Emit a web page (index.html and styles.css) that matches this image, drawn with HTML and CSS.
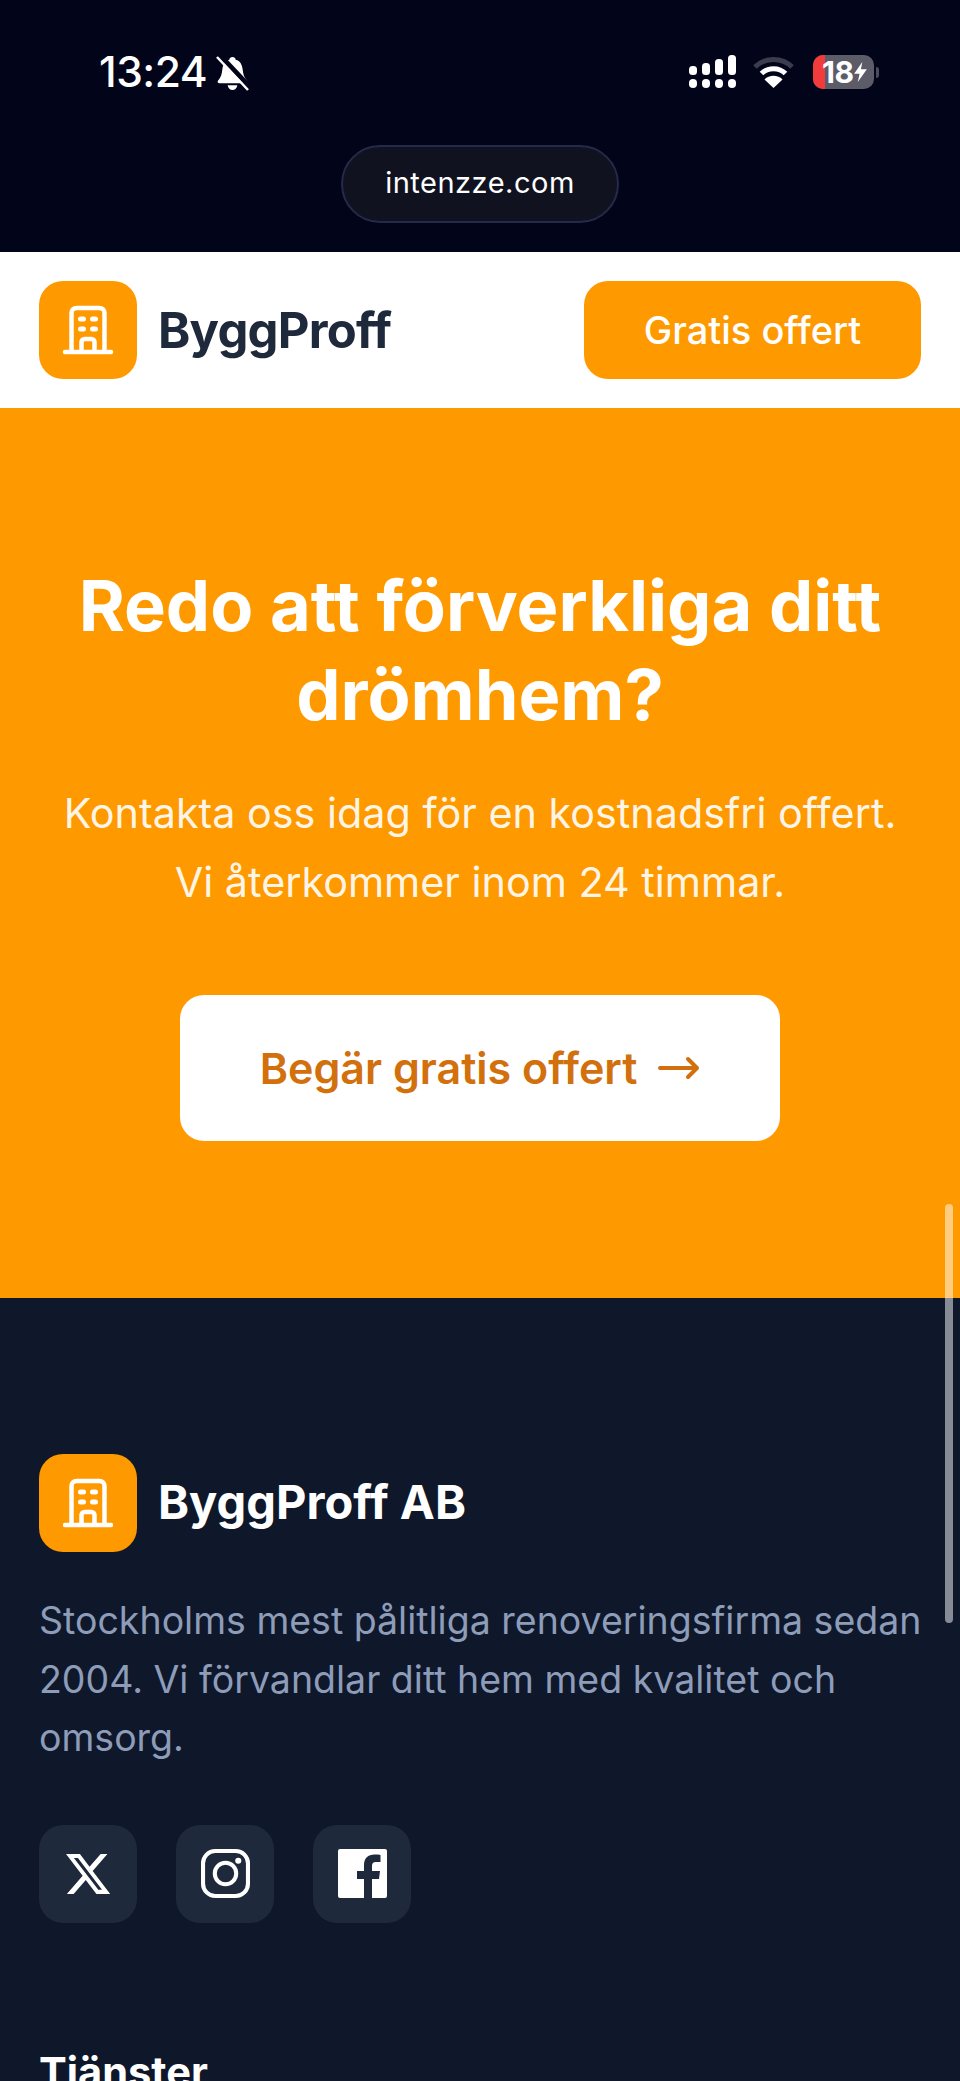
FILE: index.html
```html
<!DOCTYPE html>
<html lang="sv">
<head>
<meta charset="utf-8">
<title>ByggProff</title>
<link rel="stylesheet" href="styles.css">
</head>
<body>
<div class="page">
  <div class="chrome">
    <div class="status">
      <div class="status-left">
        <span class="time">13:24</span>
        <svg class="bell" viewBox="0 0 34 36" aria-hidden="true">
          <path fill="#fff" d="M17 1c2 0 3 1 3.300 2.800C25 5 27 9 27.500 14c.4 5 1.500 8 4.500 11.500.8 1.200 0 2.500-1.500 2.500H3.500C2 28 1.200 26.700 2 25.500 5 22 6.100 19 6.500 14 7 9 9 5 13.700 3.800 14 2 15 1 17 1z"/>
          <path fill="#fff" d="M12 30h10c-.5 3-2.500 5-5 5s-4.500-2-5-5z"/>
          <path stroke="#02041a" stroke-width="5" d="M3 -2 35 32"/>
          <path stroke="#fff" stroke-width="2.600" d="M1 1 33 35"/>
        </svg>
      </div>
      <div class="status-right">
        <svg class="signal" viewBox="0 0 48 34" aria-hidden="true">
          <g fill="#fff">
            <rect x="0" y="11" width="8" height="9" rx="3.500"/><rect x="13" y="8" width="8" height="12" rx="3.500"/><rect x="26" y="4" width="8" height="16" rx="3.500"/><rect x="39" y="0" width="8" height="20" rx="3.500"/>
            <rect x="0" y="24" width="8" height="9" rx="4"/><rect x="13" y="24" width="8" height="9" rx="4"/><rect x="26" y="24" width="8" height="9" rx="4"/><rect x="39" y="24" width="8" height="9" rx="4"/>
          </g>
        </svg>
        <svg class="wifi" viewBox="0 0 41 32" aria-hidden="true">
          <path fill="none" stroke="#3b3d4c" stroke-width="5" d="M2 11C12 1 29 1 39 11"/>
          <path fill="none" stroke="#fff" stroke-width="5" d="M8.500 17.500C15 11 26 11 32.500 17.500"/>
          <path fill="#fff" d="M20.500 32 11.500 23.500C16 18.500 25 18.500 29.500 23.500z"/>
        </svg>
        <div class="battery">
          <span class="battery-body"><span class="battery-low"></span><span class="battery-value">18</span>
            <svg class="bolt" viewBox="0 0 14 22" aria-hidden="true"><path fill="#fff" d="M9 0 0 13h6l-2 9 10-14H7.500z"/></svg>
          </span>
          <span class="battery-tip"></span>
        </div>
      </div>
    </div>
    <div class="url-pill">intenzze.com</div>
  </div>

  <header class="site-header">
    <div class="brand">
      <span class="logo">
        <svg class="logo-icon" viewBox="0 0 50 50" aria-hidden="true">
          <use href="#building"/>
        </svg>
      </span>
      <span class="brand-name">ByggProff</span>
    </div>
    <a class="offer-btn">Gratis offert</a>
  </header>

  <section class="cta">
    <h1>Redo att förverkliga ditt drömhem?</h1>
    <p>Kontakta oss idag för en kostnadsfri offert.<br>Vi återkommer inom 24 timmar.</p>
    <a class="cta-btn">
      <span>Begär gratis offert</span>
      <svg class="arrow" viewBox="0 0 42 24" aria-hidden="true"><path fill="none" stroke="#d1700d" stroke-width="4" stroke-linecap="round" stroke-linejoin="round" d="M2 12h37M30 3l9 9-9 9"/></svg>
    </a>
  </section>

  <footer class="site-footer">
    <div class="brand">
      <span class="logo">
        <svg class="logo-icon" viewBox="0 0 50 50" aria-hidden="true">
          <use href="#building"/>
        </svg>
      </span>
      <span class="footer-name">ByggProff AB</span>
    </div>
    <p class="about">Stockholms mest pålitliga renoveringsfirma sedan 2004. Vi förvandlar ditt hem med kvalitet och omsorg.</p>
    <div class="socials">
      <a class="social">
        <svg class="social-x" viewBox="1.25 2.25 21.57 19.5" aria-hidden="true">
          <path fill="#fff" d="M18.244 2.25h3.308l-7.227 8.26 8.502 11.24H16.17l-5.214-6.817L4.99 21.75H1.68l7.73-8.835L1.254 2.25H8.08l4.713 6.231zm-1.161 17.52h1.833L7.084 4.126H5.117z"/>
        </svg>
      </a>
      <a class="social">
        <svg class="social-ig" viewBox="0 0 48 48" aria-hidden="true">
          <rect x="2" y="2" width="44" height="44" rx="12" fill="none" stroke="#fff" stroke-width="4"/>
          <circle cx="24" cy="24" r="10.500" fill="none" stroke="#fff" stroke-width="4"/>
          <circle cx="36.500" cy="11.500" r="3" fill="#fff"/>
        </svg>
      </a>
      <a class="social">
        <svg class="social-fb" viewBox="0 0 49 49" aria-hidden="true">
          <path fill="#fff" d="M2 0h45a2 2 0 0 1 2 2v45a2 2 0 0 1-2 2H34V30h7l1-8h-8v-5c0-2.500 1-4 4-4h4.500V6c-1-.2-3.500-.4-6-.4-6.500 0-10.500 4-10.500 10.500V22H19v8h7v19H2a2 2 0 0 1-2-2V2a2 2 0 0 1 2-2z"/>
        </svg>
      </a>
    </div>
    <h2 class="footer-heading">Tjänster</h2>
  </footer>

  <div class="scrollbar"></div>

  <svg class="defs" aria-hidden="true">
    <symbol id="building" viewBox="0 0 50 50">
      <path fill="none" stroke="#fff" stroke-width="4.500" stroke-linecap="round" stroke-linejoin="round" d="M2 47h46M8.500 47V8a5 5 0 0 1 5-5h23a5 5 0 0 1 5 5v39M18.500 47V37a3 3 0 0 1 3-3h7a3 3 0 0 1 3 3v10"/>
      <path fill="none" stroke="#fff" stroke-width="5" stroke-linecap="round" d="M17.500 14h3M29.500 14h3M17.500 24h3M29.500 24h3"/>
    </symbol>
  </svg>
</div>
</body>
</html>
```

FILE: styles.css
```css
* {
  box-sizing: border-box;
}

html,
body {
  margin: 0;
  padding: 0;
  height: 2081px;
  overflow: hidden;
}

body {
  font-family: Inter, "Liberation Sans", sans-serif;
  background: #0f172a;
}

.page {
  position: relative;
  width: 960px;
  height: 2081px;
  overflow: hidden;
}

.chrome {
  height: 252px;
  background: #02041a;
  display: flex;
  flex-direction: column;
  align-items: center;
  padding-top: 47px;
}

.status {
  width: 100%;
  height: 50px;
  display: flex;
  justify-content: space-between;
  align-items: center;
  padding: 0 81px 0 99px;
}

.status-left {
  display: flex;
  align-items: center;
  gap: 9px;
}

.time {
  font-size: 42.500px;
  font-weight: 500;
  line-height: 50px;
  color: #fff;
  letter-spacing: -0.5px;
}

.bell {
  width: 33px;
  height: 35px;
  margin-top: 2px;
}

.status-right {
  display: flex;
  align-items: center;
}

.signal {
  width: 48px;
  height: 34px;
}

.wifi {
  width: 41px;
  height: 32px;
  margin-left: 16px;
}

.battery {
  display: flex;
  align-items: center;
  margin-left: 19px;
}

.battery-body {
  position: relative;
  width: 61px;
  height: 34px;
  border-radius: 10px;
  background: #5b5c68;
  overflow: hidden;
  display: flex;
  align-items: center;
  padding-left: 9px;
}

.battery-low {
  position: absolute;
  left: 0;
  top: 0;
  bottom: 0;
  width: 12px;
  background: #f23b3d;
}

.battery-value {
  position: relative;
  font-size: 30px;
  font-weight: 700;
  line-height: 34px;
  color: #fff;
  letter-spacing: -0.5px;
}

.bolt {
  position: relative;
  width: 13px;
  height: 20px;
  margin-left: 1px;
}

.battery-tip {
  width: 3px;
  height: 11px;
  margin-left: 2px;
  border-radius: 0 3px 3px 0;
  background: #4c4d58;
}

.url-pill {
  margin-top: 48px;
  width: 278px;
  height: 78px;
  border-radius: 39px;
  background: #10131f;
  border: 2px solid #25294a;
  color: #fff;
  font-size: 29px;
  line-height: 72px;
  text-align: center;
  letter-spacing: 0.5px;
}

.site-header {
  height: 156px;
  background: #fff;
  display: flex;
  justify-content: space-between;
  align-items: center;
  padding: 0 39px;
}

.brand {
  display: flex;
  align-items: center;
  gap: 21px;
}

.logo {
  width: 98px;
  height: 98px;
  border-radius: 24px;
  background: #ff9900;
  display: flex;
  align-items: center;
  justify-content: center;
}

.logo-icon {
  width: 50px;
  height: 50px;
}

.brand-name {
  font-size: 49px;
  font-weight: 700;
  color: #1e293b;
  letter-spacing: -0.8px;
}

.offer-btn {
  width: 337px;
  height: 98px;
  border-radius: 24px;
  background: #ff9900;
  color: #fff;
  font-size: 38px;
  font-weight: 500;
  line-height: 98px;
  text-align: center;
}

.cta {
  height: 890px;
  background: #ff9900;
  color: #fff;
  display: flex;
  flex-direction: column;
  align-items: center;
  padding-top: 153px;
  text-align: center;
}

.cta h1 {
  margin: 0;
  width: 860px;
  font-size: 70.300px;
  font-weight: 700;
  line-height: 89px;
}

.cta p {
  margin: 40px 0 0;
  font-size: 41.300px;
  font-weight: 400;
  line-height: 69px;
  color: rgba(255, 255, 255, 0.92);
}

.cta-btn {
  margin-top: 78px;
  width: 600px;
  height: 146px;
  border-radius: 24px;
  background: #fff;
  color: #d1700d;
  font-size: 43px;
  font-weight: 600;
  display: flex;
  align-items: center;
  justify-content: center;
  gap: 21px;
}

.arrow {
  width: 42px;
  height: 24px;
}

.site-footer {
  height: 783px;
  background: #0f172a;
  padding: 156px 39px 0;
}

.footer-name {
  font-size: 47px;
  font-weight: 700;
  color: #fff;
  padding-bottom: 3px;
}

.about {
  margin: 40px -8px 0 0;
  font-size: 37.500px;
  line-height: 58.500px;
  color: #8d9cb8;
}

.socials {
  display: flex;
  gap: 39px;
  margin-top: 57px;
}

.social {
  width: 98px;
  height: 98px;
  border-radius: 24px;
  background: #1e293b;
  display: flex;
  align-items: center;
  justify-content: center;
}

.social-x {
  width: 44px;
  height: 40px;
}

.social-ig {
  width: 49px;
  height: 49px;
}

.social-fb {
  width: 49px;
  height: 49px;
}

.footer-heading {
  margin: 124px 0 0;
  font-size: 41.600px;
  font-weight: 700;
  line-height: 50px;
  color: #fff;
}

.scrollbar {
  position: absolute;
  right: 7px;
  top: 1204px;
  width: 8px;
  height: 419px;
  border-radius: 4px;
  background: rgba(255, 255, 255, 0.5);
}

.defs {
  position: absolute;
  width: 0;
  height: 0;
}
```
